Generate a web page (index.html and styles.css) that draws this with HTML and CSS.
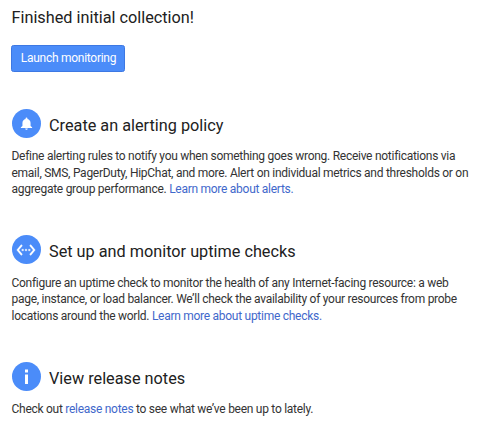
FILE: index.html
```html
<!DOCTYPE html>
<html lang="en">
<head>
<meta charset="utf-8">
<title>Monitoring</title>
<link rel="stylesheet" href="styles.css">
</head>
<body>
<main class="page">
  <h1 class="title">Finished initial collection!</h1>
  <button class="launch">Launch monitoring</button>
  <section class="item">
    <header class="head">
      <span class="badge"><svg width="15" height="15" viewBox="0 0 24 24"><path fill="#fff" d="M12 22c1.100 0 2-.9 2-2h-4c0 1.100.9 2 2 2zm6.500-6v-5c0-3.070-1.900-5.640-5-6.320V4a1.500 1.500 0 0 0-3 0v.680C7.400 5.360 5.500 7.920 5.500 11v5l-2.500 2v1h18v-1z"/></svg></span>
      <h2 class="heading">Create an alerting policy</h2>
    </header>
    <p class="text">Define alerting rules to notify you when something goes wrong. Receive notifications via<br>email, SMS, PagerDuty, HipChat, and more. Alert on individual metrics and thresholds or on<br>aggregate group performance. <a class="link">Learn more about alerts.</a></p>
  </section>
  <section class="item">
    <header class="head">
      <span class="badge"><svg width="20" height="20" viewBox="0 0 24 24"><path fill="#fff" stroke="#fff" stroke-width=".3" d="M7.770 6.760 6.230 5.480.820 12l5.410 6.520 1.540-1.280L3.420 12zM7 13h2v-2H7zm10-2h-2v2h2zm-6 2h2v-2h-2zm6.770-7.520-1.540 1.280L20.580 12l-4.350 5.240 1.540 1.280L23.180 12z"/></svg></span>
      <h2 class="heading">Set up and monitor uptime checks</h2>
    </header>
    <p class="text">Configure an uptime check to monitor the health of any Internet-facing resource: a web<br>page, instance, or load balancer. We’ll check the availability of your resources from probe<br>locations around the world. <a class="link">Learn more about uptime checks.</a></p>
  </section>
  <section class="item">
    <header class="head">
      <span class="badge"><svg width="29" height="29" viewBox="0 0 29 29"><path fill="#fff" d="M13 7.500h3v3h-3zM13 12.500h3v9.500h-3z"/></svg></span>
      <h2 class="heading">View release notes</h2>
    </header>
    <p class="text">Check out <a class="link">release notes</a> to see what we’ve been up to lately.</p>
  </section>
</main>
</body>
</html>
```
FILE: styles.css
```css
html {
  overflow: hidden;
}
body {
  margin: 0;
  background: #fff;
  color: #212121;
  font-family: Roboto, sans-serif;
}
.page {
  padding: 8px 0 0 11.5px;
  white-space: nowrap;
}
.title, .heading {
  margin: 0;
  font-size: 16.25px;
  line-height: 20px;
  font-weight: 400;
}
.launch {
  display: block;
  box-sizing: border-box;
  width: 114px;
  height: 27px;
  margin: 17px 0 37px -.5px;
  padding: 0 0 0 1px;
  border: 1px solid #3d78e3;
  border-radius: 2.5px;
  background: #4b8cf9;
  color: #fff;
  font: 400 12px/23px Roboto, sans-serif;
  letter-spacing: -.28px;
}
.item {
  margin-bottom: 37.8px;
}
.head {
  display: flex;
  align-items: flex-start;
  gap: 8.5px;
  height: 30px;
}
.badge {
  display: flex;
  align-items: center;
  justify-content: center;
  width: 29px;
  height: 29px;
  border-radius: 50%;
  background: #4b8cf9;
}
.heading {
  padding-top: 7px;
}
.text {
  margin: 9.4px 0 0;
  color: #333;
  font-size: 12px;
  line-height: 16.4px;
  letter-spacing: -.272px;
}
.link {
  color: #3f68cb;
}
.item:last-child {
  margin-bottom: 0;
}
```
